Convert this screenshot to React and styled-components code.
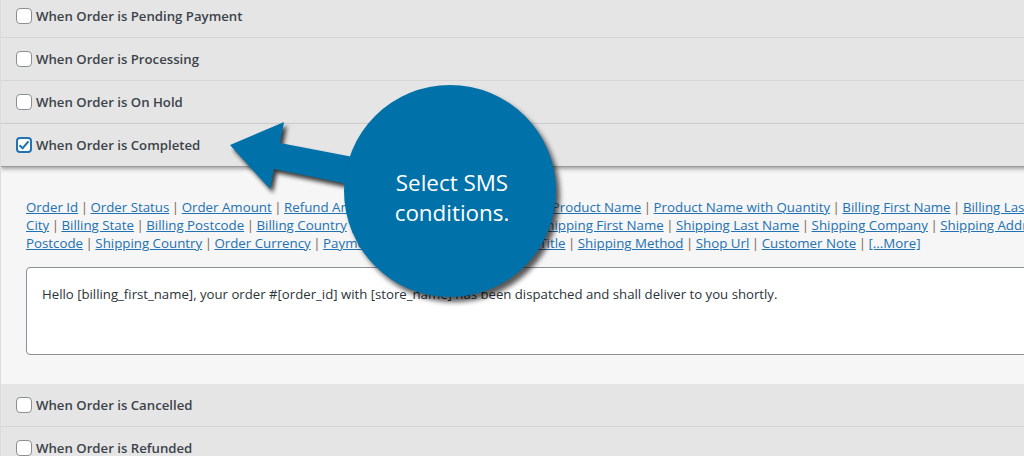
import React from "react";
import styled, { createGlobalStyle } from "styled-components";

const Global = createGlobalStyle`
  html, body { margin: 0; padding: 0; }
  body {
    width: 1024px; height: 456px; overflow: hidden;
    background: #e5e5e5;
    font-family: "Open Sans", "Noto Sans", sans-serif;
  }
`;

const Page = styled.div`
  position: relative;
  width: 1240px;
  height: 480px;
  overflow: hidden;
  border-left: 1px solid #dcdcdc;
  margin-top: -5px;
`;

const Row = styled.div`
  display: flex;
  align-items: center;
  gap: 4px;
  height: 42px;
  padding-left: 15px;
  background: #e5e5e5;
  border-bottom: 1px solid #d6d6d6;
  position: relative;
  ${(p) => p.$open && `
    border-bottom: 1px solid #9a9a9a;
    box-shadow: 0 2px 4px rgba(0,0,0,0.35);
    z-index: 1;
  `}
`;

const Box = styled.span`
  box-sizing: border-box;
  width: 16px;
  height: 16px;
  border-radius: 4px;
  background: #fff;
  border: ${(p) => (p.$checked ? "2px solid #2271b1" : "1px solid #8c8f94")};
  display: flex;
  align-items: center;
  justify-content: center;
`;

const Label = styled.span`
  font-size: 13.2px;
  font-weight: 600;
  color: #3c434a;
`;

const Panel = styled.div`
  background: #f6f6f6;
  padding: 31px 0 29px 25px;
`;

const Links = styled.div`
  font-size: 13.3px;
  line-height: 18px;
  color: #50575e;
`;

const Line = styled.div`
  white-space: nowrap;
`;

const Link = styled.a`
  color: #2271b1;
  text-decoration: underline;
`;

const Sep = styled.span`
  color: #7d6552;
  margin: 0 2.5px;
`;

const Message = styled.div`
  margin-top: 15px;
  box-sizing: border-box;
  height: 88px;
  background: #fff;
  border: 1px solid #8c8f94;
  border-radius: 4px;
  padding: 17px 15px;
  font-size: 13.2px;
  color: #2c3338;
  white-space: nowrap;
`;

const Arrow = styled.svg`
  position: absolute;
  left: 0;
  top: 5px;
  width: 600px;
  height: 320px;
  filter: drop-shadow(3px 4px 2px rgba(0,0,0,0.75));
  z-index: 2;
`;

const Bubble = styled.div`
  position: absolute;
  left: 343px;
  top: 90px;
  width: 212px;
  height: 212px;
  border-radius: 50%;
  background: #0071a9;
  box-shadow: 4px 5px 5px rgba(0,0,0,0.65);
  z-index: 3;
  display: flex;
  align-items: center;
  justify-content: center;
  padding: 13px 0 0 4px;
  box-sizing: border-box;
  color: #fff;
  font-size: 22.4px;
  line-height: 30px;
  text-align: center;
`;

const lines = [
  ["Order Id", "Order Status", "Order Amount", "Refund Amount", "Order Date", "Site Name", "Product Name", "Product Name with Quantity", "Billing First Name", "Billing Last Name", "Billing Company", "Billing Address"],
  ["City", "Billing State", "Billing Postcode", "Billing Country", "Billing Email", "Billing Phone", "Shipping First Name", "Shipping Last Name", "Shipping Company", "Shipping Address", "Shipping City"],
  ["Postcode", "Shipping Country", "Order Currency", "Payment Mode", "Payment Method Title", "Shipping Method", "Shop Url", "Customer Note", "[...More]"],
];

function Check({ checked, label, open }) {
  return (
    <Row $open={open}>
      <Box $checked={checked}>
        {checked && (
          <svg width="12" height="12" viewBox="0 0 12 12">
            <path d="M1.5 6.2 L4.6 9.2 L10.5 2.4" fill="none" stroke="#2271b1" strokeWidth="2" />
          </svg>
        )}
      </Box>
      <Label>{label}</Label>
    </Row>
  );
}

export default function App() {
  return (
    <>
      <Global />
      <Page>
        <Check label="When Order is Pending Payment" />
        <Check label="When Order is Processing" />
        <Check label="When Order is On Hold" />
        <Check checked open label="When Order is Completed" />
        <Panel>
          <Links>
            {lines.map((items, i) => (
              <Line key={i}>
                {items.map((t, j) => (
                  <React.Fragment key={t}>
                    {j > 0 && <Sep>|</Sep>}
                    <Link href="#">{t}</Link>
                  </React.Fragment>
                ))}
                {i < 2 && <Sep>|</Sep>}
              </Line>
            ))}
          </Links>
          <Message>
            Hello [billing_first_name], your order #[order_id] with [store_name] has been dispatched and shall deliver to you shortly.
          </Message>
        </Panel>
        <Check label="When Order is Cancelled" />
        <Check label="When Order is Refunded" />
        <Arrow viewBox="0 0 600 320">
          <polygon
            points="229,145 283,122 279,143 352,157 346,184 273,169 269,189"
            fill="#0071a9"
          />
        </Arrow>
        <Bubble>
          Select SMS
          <br />
          conditions.
        </Bubble>
      </Page>
    </>
  );
}
